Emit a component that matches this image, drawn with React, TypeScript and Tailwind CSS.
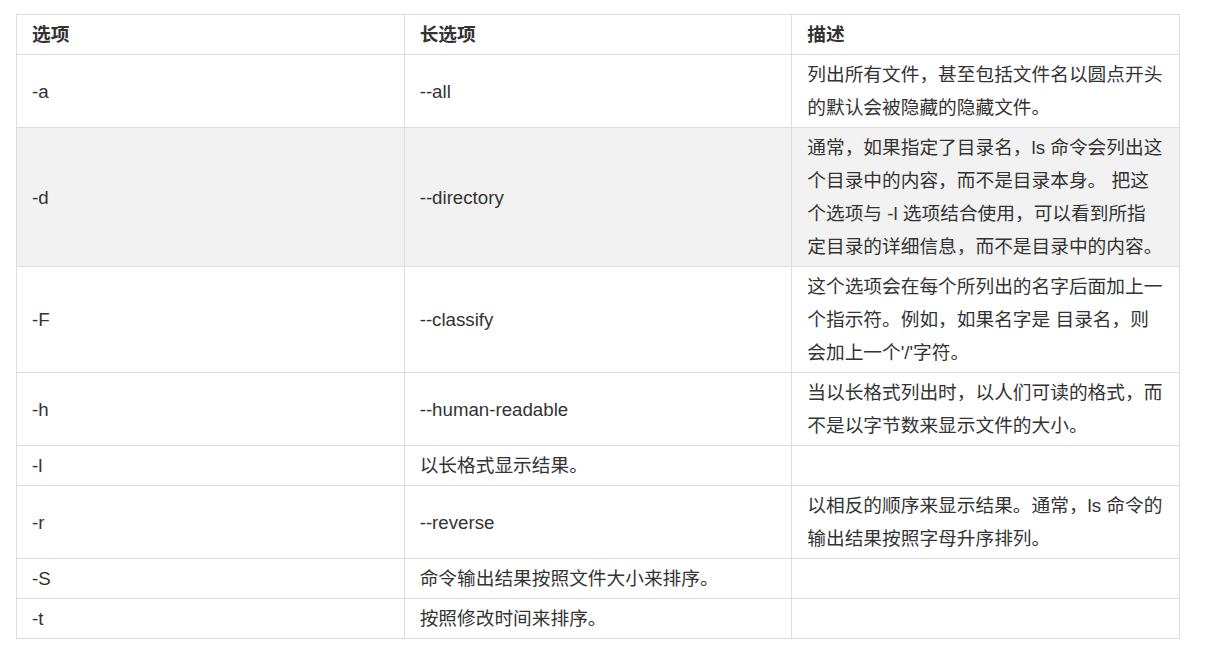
import React from 'react';

type Row = { opt: string; long: string; desc: string; shaded?: boolean };

const rows: Row[] = [
  { opt: '-a', long: '--all', desc: '列出所有文件，甚至包括文件名以圆点开头的默认会被隐藏的隐藏文件。' },
  {
    opt: '-d',
    long: '--directory',
    desc: '通常，如果指定了目录名，ls 命令会列出这个目录中的内容，而不是目录本身。 把这个选项与 -l 选项结合使用，可以看到所指定目录的详细信息，而不是目录中的内容。',
    shaded: true,
  },
  { opt: '-F', long: '--classify', desc: '这个选项会在每个所列出的名字后面加上一个指示符。例如，如果名字是 目录名，则会加上一个\'/\'字符。' },
  { opt: '-h', long: '--human-readable', desc: '当以长格式列出时，以人们可读的格式，而不是以字节数来显示文件的大小。' },
  { opt: '-l', long: '以长格式显示结果。', desc: '' },
  { opt: '-r', long: '--reverse', desc: '以相反的顺序来显示结果。通常，ls 命令的输出结果按照字母升序排列。' },
  { opt: '-S', long: '命令输出结果按照文件大小来排序。', desc: '' },
  { opt: '-t', long: '按照修改时间来排序。', desc: '' },
];

const cell = 'border border-[#dddddd] px-[15px] py-[3px] align-middle text-left';

const App = () => {
  return (
    <div
      className="min-h-screen bg-white pl-4 pt-[14px] text-[18.7px] leading-[33px] text-[#333333]"
      style={{ fontFamily: '"Liberation Sans", "Noto Sans CJK SC", sans-serif' }}
    >
      <table className="w-[1164px] table-fixed border-collapse">
        <thead>
          <tr>
            <th className={`${cell} font-bold`}>选项</th>
            <th className={`${cell} font-bold`}>长选项</th>
            <th className={`${cell} font-bold`}>描述</th>
          </tr>
        </thead>
        <tbody>
          {rows.map((r) => (
            <tr key={r.opt} className={r.shaded ? 'bg-[#f2f2f2]' : ''}>
              <td className={cell}>{r.opt}</td>
              <td className={cell}>{r.long}</td>
              <td className={cell}>{r.desc}</td>
            </tr>
          ))}
        </tbody>
      </table>
    </div>
  );
};

export default App;
